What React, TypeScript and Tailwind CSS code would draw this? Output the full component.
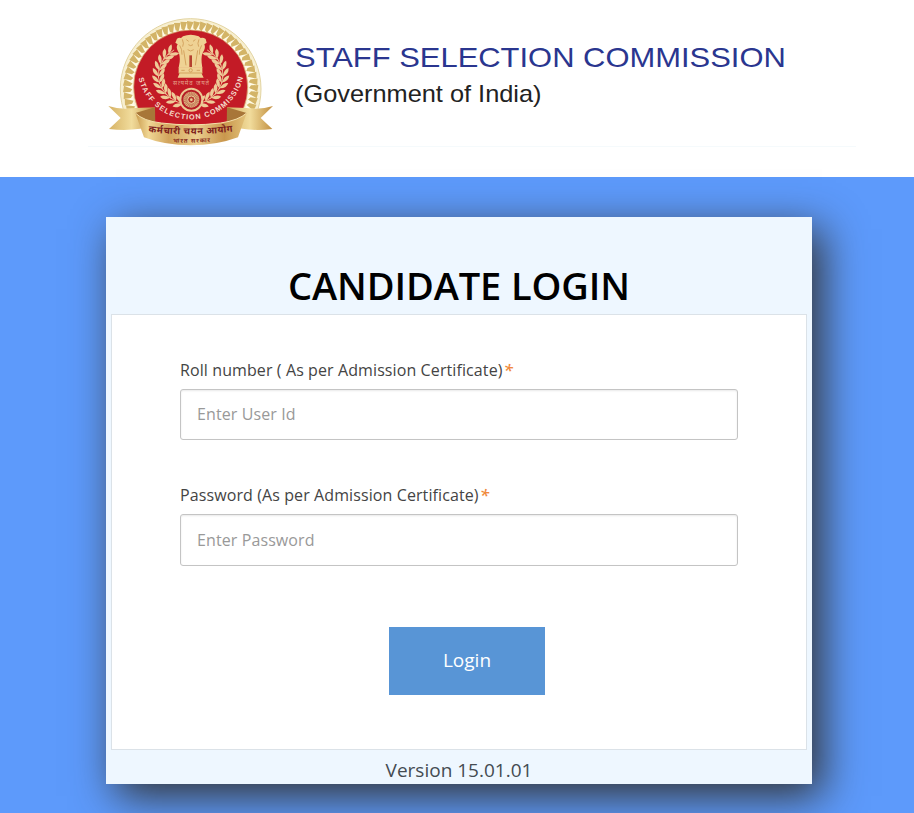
const CX = 272;

// Points and headings of the leaf pairs along the left laurel branch
const leaves = Array.from({ length: 11 }, (_, i) => {
  const deg = 108 + i * 12.2;
  const t = (deg * Math.PI) / 180;
  return { x: CX + 96 * Math.cos(t), y: 196 + 87 * Math.sin(t), r: deg + 90 };
});

function Laurel() {
  return (
    <g fill="#eecb98">
      {leaves.map((l) => (
        <g key={l.r} transform={`translate(${l.x} ${l.y}) rotate(${l.r})`}>
          <path d="M-5 0 Q2 -20 20 -18 Q17 -4 -5 0Z" />
          <path d="M-5 0 Q2 20 20 18 Q17 4 -5 0Z" />
          <path d="M-8 -1.2 H16 V1.2 H-8Z" />
        </g>
      ))}
    </g>
  );
}

function Emblem() {
  const teeth = Array.from({ length: 64 }, (_, i) => i * 5.625);
  const spokes = Array.from({ length: 24 }, (_, i) => i * 15);
  return (
    <svg viewBox="0 0 540 426" className="h-[142px] w-[180px] shrink-0" aria-label="Staff Selection Commission emblem">
      <defs>
        <linearGradient id="band" x1="0" x2="1">
          <stop offset="0" stopColor="#c99b4d" />
          <stop offset=".12" stopColor="#f0d795" />
          <stop offset=".3" stopColor="#d2a45d" />
          <stop offset=".55" stopColor="#ebce8e" />
          <stop offset=".8" stopColor="#c9974d" />
          <stop offset="1" stopColor="#e3c37a" />
        </linearGradient>
        <linearGradient id="tail" x1="0" x2="1">
          <stop offset="0" stopColor="#d6b264" />
          <stop offset=".5" stopColor="#f1dc9c" />
          <stop offset="1" stopColor="#c18e3f" />
        </linearGradient>
        <path id="legend" d="M111 167 A161 161 0 0 0 433 167" />
        <clipPath id="upper">
          <path d="M0 0 H540 V296 H430 V350 H114 V296 H0Z" />
        </clipPath>
      </defs>

      <g clipPath="url(#upper)">
        <circle cx={CX} cy="237" r="211" fill="#f7efd0" stroke="#e2d3a0" strokeWidth="3" />
        <circle cx={CX} cy="235" r="188" fill="none" stroke="#fffbe6" strokeWidth="27" />
        {teeth.map((a) => (
          <path key={a} d="M261 33 L281 36 L270 61 L262 55Z" fill="#d3b467" transform={`rotate(${a} 272 236)`} />
        ))}
        <circle cx={CX} cy="231" r="171" fill="#c31b26" stroke="#d9b979" strokeWidth="2" />
      </g>

      <Laurel />
      <g transform="translate(544 0) scale(-1 1)">
        <Laurel />
      </g>

      {/* Lion capital */}
      <g fill="#efd294">
        <path d="M249 79 Q272 70 296 79 L302 84 Q309 81 317 87 L320 98 L313 103 Q318 113 309 127 Q303 137 305 158 L307 173 H236 L239 156 Q241 137 234 124 Q227 112 233 103 L226 98 L231 86 Q238 81 243 84Z" />
        <path d="M236 172 H307 V190 H236Z M239 189 H304 L311 203 H233Z" />
      </g>
      <g fill="none" stroke="#cf9a55" strokeWidth="2.5">
        <path d="M247 88 Q253 101 248 110 M297 88 Q291 101 296 110 M259 89 L266 94 M279 94 L286 89 M265 104 Q272 110 279 104 M251 121 L258 166 M293 121 L286 166 M239 106 Q247 118 246 134 M305 106 Q297 118 298 134 M263 119 Q272 127 281 119" />
        <path d="M236 189 H308 M244 181 H254 M290 181 H300" />
        <circle cx="272" cy="181" r="5" />
      </g>
      <path d="M268 136 H276 V171 H268Z" fill="#b5402f" />

      <text x="273" y="224" textAnchor="middle" textLength="108" fontSize="18" className="font-['Noto_Sans_Devanagari','Noto_Sans',sans-serif]" fill="#e5a08a">
        सत्यमेव जयते
      </text>

      {/* Wheel */}
      <circle cx="274" cy="269" r="33" fill="#b51d25" stroke="#ecc994" strokeWidth="6" />
      <circle cx="274" cy="269" r="24" fill="#dcae7c" />
      {spokes.map((a) => (
        <path key={a} d="M274 246 V265" stroke="#b04a38" strokeWidth="1.5" transform={`rotate(${a} 274 269)`} />
      ))}
      <circle cx="274" cy="269" r="11" fill="#b5382e" stroke="#eccd98" strokeWidth="3" />
      <circle cx="274" cy="269" r="4" fill="#eccd98" />

      <text fontSize="22" className="font-['Liberation_Sans',sans-serif] font-bold" fill="#f5dccb">
        <textPath href="#legend" startOffset="38" textLength="432">
          STAFF SELECTION COMMISSION
        </textPath>
      </text>

      {/* Ribbon */}
      <path d="M25 288 Q62 300 105 294 L165 292 V345 Q104 366 27 357 L62 324Z" fill="url(#tail)" />
      <path d="M519 288 Q482 300 439 294 L381 292 V345 Q440 366 517 357 L482 324Z" fill="url(#tail)" />
      <path d="M106 309 L165 292 L166 349 L131 344Z" fill="#a87638" />
      <path d="M440 309 L381 292 L380 349 L415 344Z" fill="#a87638" />
      <path d="M106 309 Q130 333 184 339 Q272 350 362 339 Q416 331 440 309 L414 382 Q350 406 272 406 Q194 406 132 382Z" fill="url(#band)" />
      <path d="M106 309 Q130 333 184 339 Q272 350 362 339 Q416 331 440 309" fill="none" stroke="#f4dfaa" strokeWidth="3" />
      <path id="titleArc" d="M145 366 Q272 381 402 364" fill="none" />
      <path id="subtitleArc" d="M205 396 Q272 402 350 394" fill="none" />
      <text fontSize="28" className="font-['Noto_Sans_Devanagari','Noto_Sans',sans-serif] font-bold" fill="#7d211c">
        <textPath href="#titleArc" textLength="254">कर्मचारी चयन आयोग</textPath>
      </text>
      <text fontSize="18" className="font-['Noto_Sans_Devanagari','Noto_Sans',sans-serif] font-bold" fill="#8b3324">
        <textPath href="#subtitleArc" startOffset="14" textLength="112">भारत सरकार</textPath>
      </text>
    </svg>
  );
}

interface FieldProps {
  id: string;
  label: string;
  placeholder: string;
  type: string;
  inputClass: string;
}

function Field({ id, label, placeholder, type, inputClass }: FieldProps) {
  return (
    <div className="flex flex-col">
      <label htmlFor={id} className="flex h-6 items-center text-base tracking-[0.1px] whitespace-nowrap text-[#444]">
        <span>{label}</span>
        <span className="ml-px text-[17px] leading-6 font-semibold text-[#f08a3c] italic">*</span>
      </label>
      <input
        id={id}
        type={type}
        placeholder={placeholder}
        className={`mt-[7px] w-full rounded-[3px] border border-[#c4c4c4] bg-white px-4 text-base tracking-[0.1px] shadow-[inset_0_1px_2px_rgba(0,0,0,0.09)] outline-none placeholder:text-[#999] ${inputClass}`}
      />
    </div>
  );
}

export default function App() {
  return (
    <div className="flex h-[813px] w-[914px] flex-col overflow-hidden bg-[#5d9afb] font-['Open_Sans',sans-serif]">
      <header className="h-[177px] shrink-0 bg-white pr-[58px] pl-[88px]">
        <div className="flex h-[147px] border-b border-[#f5fafc] pt-[10px] pl-3">
          <Emblem />
          <div className="ml-[15px] flex flex-col items-start pt-[29px] font-['Liberation_Sans',sans-serif] whitespace-nowrap">
            <h2 className="origin-left scale-x-[1.085] text-[28.5px] leading-9 text-[#2a368f]">STAFF SELECTION COMMISSION</h2>
            <p className="origin-left scale-x-[1.056] pt-px text-2xl leading-9 text-[#222]">(Government of India)</p>
          </div>
        </div>
      </header>

      <main className="mt-10 ml-[106px] flex h-[567px] w-[706px] shrink-0 flex-col bg-[#eef7ff] px-[5px] shadow-[10px_12px_40px_#333]">
        <h1 className="flex h-[97px] items-end justify-center pb-px text-[38px] leading-[56px] font-semibold tracking-[-0.1px] whitespace-nowrap text-black">
          CANDIDATE LOGIN
        </h1>
        <form className="flex h-[436px] flex-col border border-[#dbe2e8] bg-white px-[68px] pt-[43px]">
          <Field id="user" type="text" label="Roll number ( As per Admission Certificate)" placeholder="Enter User Id" inputClass="h-[51px] pb-[2px]" />
          <div className="mt-[43px]">
            <Field id="password" type="password" label="Password (As per Admission Certificate)" placeholder="Enter Password" inputClass="h-[52px]" />
          </div>
          <button type="button" className="mt-[61px] ml-[209px] h-[68px] w-[156px] bg-[#5895d6] pb-[2px] text-[19px] font-medium text-white">
            Login
          </button>
        </form>
        <footer className="flex h-[34px] items-center justify-center pt-[6px] text-[19px] whitespace-nowrap text-[#444b52]">Version 15.01.01</footer>
      </main>
    </div>
  );
}
